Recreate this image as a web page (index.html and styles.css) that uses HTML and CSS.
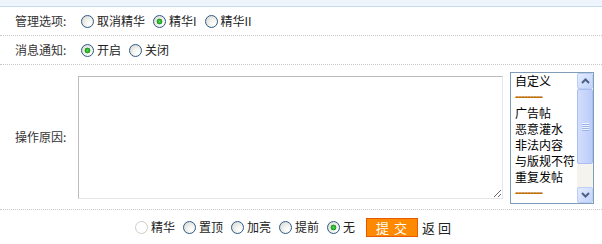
FILE: index.html
```html
<!DOCTYPE html>
<html lang="zh">
<head>
<meta charset="utf-8">
<link rel="stylesheet" href="styles.css">
</head>
<body>
<div class="topbar"></div>
<div class="row r-short">
  <div class="label">管理选项:</div>
  <div class="field">
    <label class="opt"><input type="radio" name="m">取消精华</label>
    <label class="opt"><input type="radio" name="m" checked>精华I</label>
    <label class="opt"><input type="radio" name="m">精华II</label>
  </div>
</div>
<div class="row r-short">
  <div class="label">消息通知:</div>
  <div class="field">
    <label class="opt"><input type="radio" name="n" checked>开启</label>
    <label class="opt"><input type="radio" name="n">关闭</label>
  </div>
</div>
<div class="row r-reason">
  <div class="label">操作原因:</div>
  <div class="field reason">
    <textarea class="ta"></textarea>
    <div class="listbox">
      <div class="items">
        <div>自定义</div>
        <div class="dash">---------</div>
        <div>广告帖</div>
        <div>恶意灌水</div>
        <div>非法内容</div>
        <div>与版规不符</div>
        <div>重复发帖</div>
        <div class="dash">---------</div>
      </div>
      <div class="sbar">
        <div class="sbtn up"><svg width="9" height="6" viewBox="0 0 9 6"><path d="M1 5 L4.5 1.5 L8 5" fill="none" stroke="#4d6185" stroke-width="2"/></svg></div>
        <div class="thumb"><span></span><span></span><span></span><span></span></div>
        <div class="track"></div>
        <div class="sbtn down"><svg width="9" height="6" viewBox="0 0 9 6"><path d="M1 1 L4.5 4.5 L8 1" fill="none" stroke="#4d6185" stroke-width="2"/></svg></div>
      </div>
    </div>
  </div>
</div>
<div class="row r-actions">
  <label class="opt"><input type="radio" name="a" disabled>精华</label>
  <label class="opt"><input type="radio" name="a">置顶</label>
  <label class="opt"><input type="radio" name="a">加亮</label>
  <label class="opt"><input type="radio" name="a">提前</label>
  <label class="opt"><input type="radio" name="a" checked>无</label>
  <button class="submit">提 交</button>
  <span class="back">返 回</span>
</div>
</body>
</html>
```
FILE: styles.css
```css
html, body {
  margin: 0;
  padding: 0;
  background: #fff;
}
body {
  width: 602px;
  font-family: "Noto Sans CJK SC", "Noto Sans", sans-serif;
  font-size: 12px;
  color: #333;
}
.topbar {
  height: 6px;
  background: #edf4fc;
  border-bottom: 1px solid #c4daee;
}
.row {
  display: flex;
  align-items: center;
  border-bottom: 1px dotted #c8c8c8;
}
.r-short {
  height: 28px;
}
.r-reason {
  height: 144px;
}
.label {
  width: 63px;
  padding-left: 15px;
  flex: none;
  line-height: 14px;
}
.field {
  display: flex;
  align-items: center;
}
.opt {
  display: flex;
  align-items: center;
  margin-right: 5px;
  line-height: 14px;
  color: #222;
}
.opt input {
  appearance: none;
  -webkit-appearance: none;
  width: 13px;
  height: 13px;
  margin: 1px 3px 0 3px;
  border-radius: 50%;
  border: 1px solid #2c5a8a;
  box-sizing: border-box;
  background: radial-gradient(circle at 70% 70%, #ffffff 0%, #f4f4f0 35%, #d6d5cc 100%);
}
.opt input:checked {
  background:
    radial-gradient(circle at 50% 50%, #5fe05f 0, #2bb02b 1.6px, #1e941e 2.6px, rgba(30,148,30,0) 3.2px),
    radial-gradient(circle at 70% 70%, #ffffff 0%, #f4f4f0 35%, #d6d5cc 100%);
}
.opt input:disabled {
  border-color: #cfcdc1;
  background: #fff;
}
.reason {
  gap: 7px;
}
.ta {
  width: 425px;
  height: 123px;
  box-sizing: border-box;
  margin: 1px 0 0 0;
  border: 1px solid;
  border-color: #bcbcbc #e6e6e6 #e6e6e6 #bcbcbc;
  resize: both;
  padding: 2px;
  font: inherit;
  outline: none;
}
.listbox {
  width: 84px;
  height: 132px;
  box-sizing: border-box;
  border: 1px solid #7f9db9;
  display: flex;
  background: #fff;
  margin-top: 1px;
}
.items {
  flex: 1;
  padding-left: 4px;
  line-height: 16px;
  color: #000;
  white-space: nowrap;
  overflow: hidden;
}
.items .dash {
  color: #c06a00;
  letter-spacing: -1px;
  font-family: "Liberation Sans", sans-serif;
  font-weight: bold;
}
.sbar {
  width: 16px;
  flex: none;
  display: flex;
  flex-direction: column;
  background: #f4f3ee;
}
.sbtn {
  height: 16px;
  box-sizing: border-box;
  border: 1px solid #bccef5;
  border-radius: 2px;
  background: linear-gradient(135deg, #e3ecff, #c2d3fc);
  display: flex;
  align-items: center;
  justify-content: center;
}
.thumb {
  height: 75px;
  box-sizing: border-box;
  border: 1px solid #a9bdf0;
  border-radius: 2px;
  background: linear-gradient(90deg, #d2defd, #bcccf9);
  display: flex;
  flex-direction: column;
  align-items: center;
  justify-content: center;
  gap: 1px;
}
.thumb span {
  width: 7px;
  height: 1px;
  background: #eef3ff;
  box-shadow: 0 1px 0 #9cb4ec;
}
.track {
  flex: 1;
}
.r-actions {
  height: 34px;
  border-bottom: none;
  justify-content: center;
  padding-left: 0;
  padding-right: 19px;
}
.submit {
  width: 52px;
  height: 19px;
  margin-left: 6px;
  padding: 0;
  border: 1px solid #e85a00;
  background: #ff8a00;
  color: #fff;
  font: inherit;
  font-size: 13px;
  line-height: 17px;
  letter-spacing: 1px;
}
.back {
  margin-left: 4px;
  color: #222;
  font-size: 13px;
}
```
